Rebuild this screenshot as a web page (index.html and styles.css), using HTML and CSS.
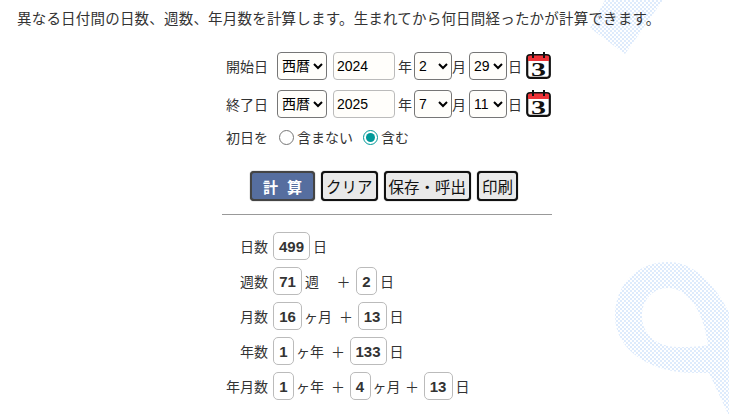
FILE: index.html
```html
<!DOCTYPE html>
<html lang="ja">
  <head>
    <meta charset="UTF-8">
    <title>日付間の日数計算</title>
    <link rel="stylesheet" href="styles.css">
  </head>
  <body>
    <svg class="backdrop" viewBox="0 0 729 419" aria-hidden="true">
      <defs>
        <pattern id="dots" width="4" height="4" patternUnits="userSpaceOnUse">
          <rect x="0" y="0" width="2" height="2" />
          <rect x="2" y="2" width="2" height="2" />
        </pattern>
      </defs>
      <path class="shape" d="M605 0 L590 28 L625 54 L663 0 Z" />
      <path class="shape" fill-rule="evenodd" d="M729 312 C712 280 692 262 668 262 C637 262 615 285 615 316 C615 350 650 373 695 373 L709 373 L729 416 Z M668 288 C690 288 704 315 708 345 C695 347 688 347 678 347 C658 347 642 335 642 316 C642 300 653 288 668 288 Z" />
    </svg>

    <main>
      <p class="intro">異なる日付間の日数、週数、年月数を計算します。生まれてから何日間経ったかが計算できます。</p>

      <form class="date-form">
        <div class="row">
          <label class="label">開始日</label>
          <select class="era"><option>西暦</option></select>
          <input class="year" type="text" value="2024">
          <span class="unit unit--year">年</span>
          <select class="num"><option>2</option></select>
          <span class="unit unit--month">月</span>
          <select class="num"><option>29</option></select>
          <span class="unit unit--day">日</span>
          <svg class="cal" viewBox="0 0 25 28">
            <rect x="1.2" y="4" width="22.6" height="22.8" rx="3" fill="#fff" stroke="#111" stroke-width="2.2" />
            <path d="M2 10 V6 Q2 4.5 4 4.5 H21 Q23 4.5 23 6 V10 Z" fill="#ee3338" />
            <path d="M7 1 V7 M18 1 V7" stroke="#111" stroke-width="2" />
            <text x="12.5" y="24.5" class="cal-num" textLength="15" lengthAdjust="spacingAndGlyphs">3</text>
          </svg>
        </div>
        <div class="row">
          <label class="label">終了日</label>
          <select class="era"><option>西暦</option></select>
          <input class="year" type="text" value="2025">
          <span class="unit unit--year">年</span>
          <select class="num"><option>7</option></select>
          <span class="unit unit--month">月</span>
          <select class="num"><option>11</option></select>
          <span class="unit unit--day">日</span>
          <svg class="cal" viewBox="0 0 25 28">
            <rect x="1.2" y="4" width="22.6" height="22.8" rx="3" fill="#fff" stroke="#111" stroke-width="2.2" />
            <path d="M2 10 V6 Q2 4.5 4 4.5 H21 Q23 4.5 23 6 V10 Z" fill="#ee3338" />
            <path d="M7 1 V7 M18 1 V7" stroke="#111" stroke-width="2" />
            <text x="12.5" y="24.5" class="cal-num" textLength="15" lengthAdjust="spacingAndGlyphs">3</text>
          </svg>
        </div>
        <div class="row row--radio">
          <span class="label">初日を</span>
          <label class="choice"><input type="radio" name="first">含まない</label>
          <label class="choice"><input type="radio" name="first" checked>含む</label>
        </div>

        <div class="buttons">
          <button type="button" class="btn btn--main">計 算</button>
          <button type="button" class="btn">クリア</button>
          <button type="button" class="btn">保存・呼出</button>
          <button type="button" class="btn">印刷</button>
        </div>
      </form>

      <hr class="rule">

      <div class="results">
        <div class="result">
          <span class="result-label">日数</span>
          <b class="val val--3">499</b><span>日</span>
        </div>
        <div class="result">
          <span class="result-label">週数</span>
          <b class="val val--2">71</b><span>週</span>
          <span class="plus plus--wide">＋</span>
          <b class="val val--1">2</b><span>日</span>
        </div>
        <div class="result">
          <span class="result-label">月数</span>
          <b class="val val--2">16</b><span class="unit-m">ヶ月</span>
          <span class="plus">＋</span>
          <b class="val val--2">13</b><span>日</span>
        </div>
        <div class="result">
          <span class="result-label">年数</span>
          <b class="val val--1">1</b><span class="unit-m">ヶ年</span>
          <span class="plus">＋</span>
          <b class="val val--3">133</b><span>日</span>
        </div>
        <div class="result">
          <span class="result-label">年月数</span>
          <b class="val val--1">1</b><span class="unit-m">ヶ年</span>
          <span class="plus">＋</span>
          <b class="val val--1">4</b><span class="unit-m">ヶ月</span>
          <span class="plus plus--tight">＋</span>
          <b class="val val--2">13</b><span>日</span>
        </div>
      </div>
    </main>
  </body>
</html>
```

FILE: styles.css
```css
html,
body {
  height: 100%;
  margin: 0;
  overflow: hidden;
}

body {
  position: relative;
  background-color: #fff;
  color: #333;
  font-family: "Liberation Sans", "Noto Sans CJK JP", sans-serif;
  font-size: 14px;
}

.backdrop {
  position: absolute;
  left: 0;
  top: 0;
  width: 729px;
  height: 419px;
}

#dots rect {
  fill: #deebfc;
}

.shape {
  fill: url("#dots");
}

main {
  position: relative;
  padding: 9px 0 0 17px;
}

.intro {
  margin: 0;
  font-size: 14.5px;
  line-height: 20px;
  letter-spacing: 0.2px;
}

.date-form {
  margin: 23px 0 0 205px;
}

.row {
  display: flex;
  align-items: center;
  height: 28px;
  margin-bottom: 10px;
}

.row--radio {
  height: 18px;
  margin-bottom: 0;
}

.label {
  width: 46px;
  margin-right: 9px;
  text-align: right;
}

select,
.year {
  box-sizing: border-box;
  height: 28px;
  font-family: "Liberation Sans", "Noto Sans CJK JP", sans-serif;
  font-size: 14px;
  color: #000;
  background-color: #fffefb;
}

select {
  border: 1px solid #767676;
  border-radius: 4px;
}

.era {
  width: 50px;
  margin-right: 6px;
}

.year {
  width: 62px;
  padding: 0 3px;
  border: 1px solid #bbb;
  border-radius: 4px;
}

.unit {
  width: 14px;
  text-align: center;
}

.unit--year {
  margin: 0 2px 0 3px;
}

.unit--month {
  margin: 0 3px 0 0;
}

.unit--day {
  margin: 0 0 0 1px;
}

.num {
  width: 38px;
}

.cal {
  width: 25px;
  height: 28px;
  margin-left: 4px;
  margin-top: -2px;
}

.cal-num {
  font-family: "Liberation Serif", serif;
  font-size: 19px;
  font-weight: bold;
  fill: #111;
  transform: translateX(-7.5px);
}

.choice {
  display: flex;
  align-items: center;
  margin-right: 8px;
}

.choice input {
  width: 15px;
  height: 15px;
  margin: 0 3px 0 2px;
  accent-color: #009999;
}

.buttons {
  display: flex;
  gap: 6px;
  margin: 25px 0 0 28px;
}

.btn {
  height: 30px;
  padding: 0 3px;
  border: 2px solid #111;
  border-radius: 4px;
  box-shadow: 0 0 1px #333;
  background-color: #e9e9e9;
  color: #111;
  font-family: inherit;
  font-size: 15.5px;
}

.btn--main {
  width: 65px;
  border-color: #444;
  background-color: #566e9f;
  color: #fff;
  font-weight: bold;
  font-size: 15px;
  word-spacing: 5px;
}

.rule {
  width: 330px;
  height: 1px;
  margin: 13px 0 0 205px;
  border: 0;
  background-color: #999;
}

.results {
  display: flex;
  flex-direction: column;
  gap: 7px;
  margin: 17px 0 0 205px;
}

.result {
  display: flex;
  align-items: center;
  height: 28px;
}

.result-label {
  width: 46px;
  margin-right: 5px;
  text-align: right;
}

.val {
  box-sizing: border-box;
  display: flex;
  align-items: center;
  justify-content: center;
  height: 28px;
  margin-right: 3px;
  border: 1px solid #bbb;
  border-radius: 5px;
  background-color: #fff;
  font-size: 15px;
}

.val--1 { width: 21px; }
.val--2 { width: 29px; }
.val--3 { width: 37px; }

.unit-m {
  margin-left: -1px;
}

.plus {
  margin: 0 4.5px 0 7px;
}

.plus--wide {
  margin: 0 5.5px 0 17.5px;
}

.plus--tight {
  margin: 0 4.5px;
}
```
